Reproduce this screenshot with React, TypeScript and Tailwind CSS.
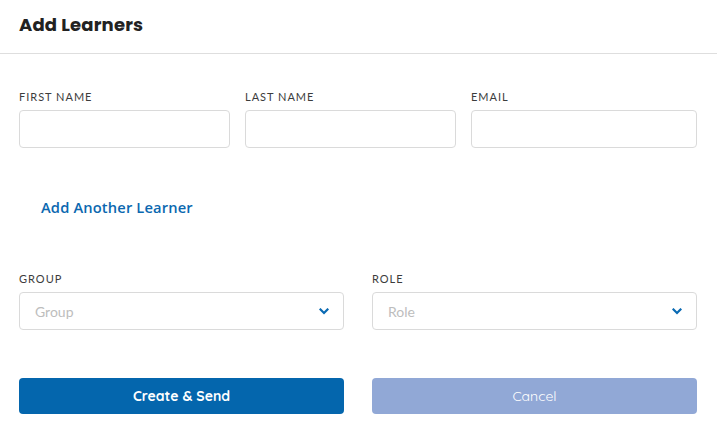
function Chevron() {
  return (
    <svg width="10" height="7" viewBox="0 0 10 7" className="text-[#0a6ab3]" aria-hidden="true">
      <path d="M1.5 1.5 L5 5 L8.5 1.5" fill="none" stroke="currentColor" strokeWidth="2.2" strokeLinecap="square" />
    </svg>
  );
}

function Field({ label }: { label: string }) {
  return (
    <div className="flex flex-col">
      <label className="mb-[5px] text-[11px] leading-[16px] tracking-[0.09em] font-normal text-[#3c3c3c] font-['Lato',sans-serif] uppercase">
        {label}
      </label>
      <input className="h-[38px] w-full rounded-[4px] border border-[#dadada] bg-white px-3 outline-none" />
    </div>
  );
}

function SelectBox({ label, placeholder }: { label: string; placeholder: string }) {
  return (
    <div className="flex flex-col">
      <label className="mb-[5px] text-[11px] leading-[16px] tracking-[0.09em] font-normal text-[#3c3c3c] font-['Lato',sans-serif] uppercase">
        {label}
      </label>
      <div className="flex h-[38px] items-center justify-between rounded-[4px] border border-[#dadada] bg-white pl-[15px] pr-[14px]">
        <span className="text-[14px] text-[#bdbdbd] font-['Lato',sans-serif]">{placeholder}</span>
        <Chevron />
      </div>
    </div>
  );
}

export default function App() {
  return (
    <div className="w-[717px] h-[432px] bg-white overflow-hidden">
      <div className="flex h-[54px] items-center border-b border-[#dedede] px-[19px]">
        <h2 className="text-[18px] font-bold tracking-[0.01em] text-[#222] font-['Poppins','Inter',sans-serif] -mt-[4px]">
          Add Learners
        </h2>
      </div>

      <div className="px-[19px] pr-[20px] pt-[35px]">
        <div className="grid grid-cols-[211px_211px_226px] gap-x-[15px]">
          <Field label="First Name" />
          <Field label="Last Name" />
          <Field label="Email" />
        </div>

        <button className="block mt-[49px] ml-[22px] h-[20px] text-[14.7px] font-semibold leading-[20px] tracking-[0.01em] text-[#0b68b0] font-['Open_Sans',sans-serif]">
          Add Another Learner
        </button>

        <div className="mt-[54px] grid grid-cols-2 gap-x-[28px]">
          <SelectBox label="Group" placeholder="Group" />
          <SelectBox label="Role" placeholder="Role" />
        </div>

        <div className="mt-[48px] grid grid-cols-2 gap-x-[28px]">
          <button className="h-[36px] rounded-[4px] bg-[#0466ad] text-[14px] font-bold text-white font-['Quicksand','Nunito','Lato',sans-serif]">
            Create &amp; Send
          </button>
          <button className="h-[36px] rounded-[4px] bg-[#91a8d6] text-[14px] text-white font-['Quicksand','Nunito','Lato',sans-serif]">
            Cancel
          </button>
        </div>
      </div>
    </div>
  );
}
